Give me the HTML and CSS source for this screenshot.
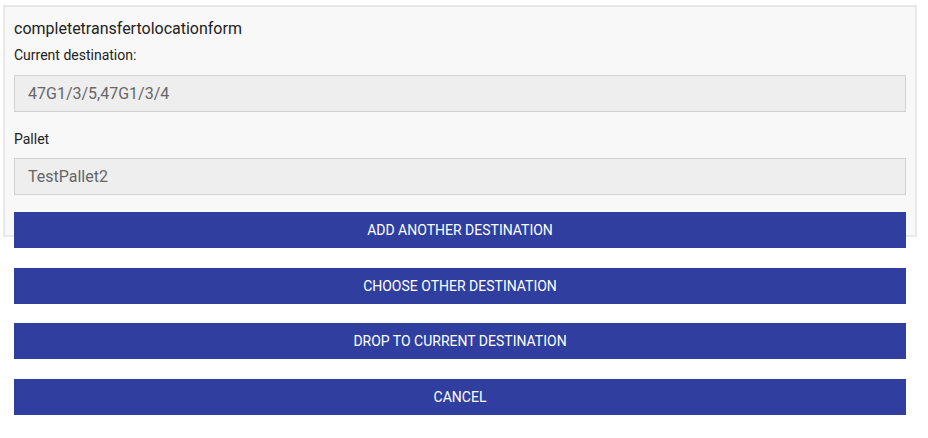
FILE: index.html
```html
<!DOCTYPE html>
<html>
<head>
<meta charset="utf-8">
<link rel="stylesheet" href="styles.css">
</head>
<body>
<div class="page">
  <div class="panel">
    <div class="title">completetransfertolocationform</div>
    <div class="field">
      <div class="label">Current destination:</div>
      <div class="input">47G1/3/5,47G1/3/4</div>
    </div>
    <div class="field second">
      <div class="label">Pallet</div>
      <div class="input">TestPallet2</div>
    </div>
  </div>
  <div class="actions">
    <button class="btn">ADD ANOTHER DESTINATION</button>
    <button class="btn">CHOOSE OTHER DESTINATION</button>
    <button class="btn">DROP TO CURRENT DESTINATION</button>
    <button class="btn">CANCEL</button>
  </div>
</div>
</body>
</html>
```

FILE: styles.css
```css
html, body {
  margin: 0;
  padding: 0;
  background: #ffffff;
  font-family: Roboto, "Liberation Sans", sans-serif;
}
.page {
  padding: 5px 11px 20px 3px;
}
.panel {
  border: 2px solid #e8e8e8;
  background: #f8f8f8;
  padding: 0 9px 40px 9px;
}
.title {
  font-size: 16px;
  line-height: 20px;
  color: #222222;
  padding-top: 12px;
}
.field {
  margin-top: 8px;
}
.field.second {
  margin-top: 19px;
}
.label {
  font-size: 14px;
  line-height: 17px;
  color: #222222;
  margin-bottom: 11px;
}
.field.second .label {
  margin-bottom: 10px;
}
.input {
  height: 35px;
  line-height: 35px;
  border: 1px solid #d2d2d2;
  background: #eeeeee;
  color: #666666;
  font-size: 16px;
  padding-left: 13px;
}
.actions {
  position: relative;
  margin: -25px 11px 0 11px;
  display: flex;
  flex-direction: column;
  gap: 19.6px;
}
.btn {
  display: block;
  width: 100%;
  height: 36px;
  margin: 0;
  border: none;
  background: #303f9f;
  color: #ffffff;
  font-family: Roboto, "Liberation Sans", sans-serif;
  font-size: 14px;
  padding: 0;
}
```
